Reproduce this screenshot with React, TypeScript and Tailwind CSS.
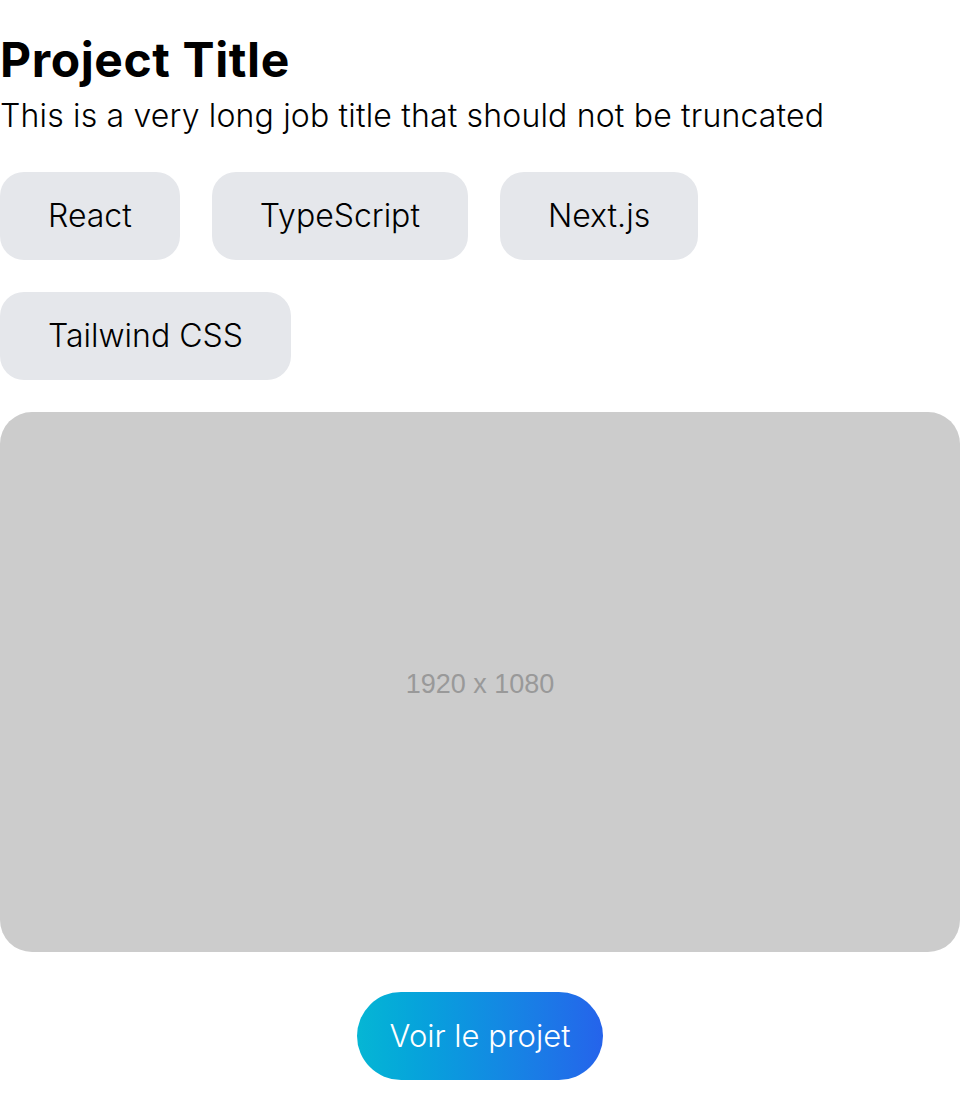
import React from 'react';

const tags = ['React', 'TypeScript', 'Next.js', 'Tailwind CSS'];

const App = () => {
  return (
    <section className="w-[960px] bg-white pt-[30px] font-['Inter',sans-serif] text-black">
      {/* header */}
      <h1 className="text-5xl font-bold leading-[60px] tracking-[0.6px]">Project Title</h1>
      <p className="mt-1.5 text-[32px] font-light leading-10 tracking-[0.17px]">
        This is a very long job title that should not be truncated
      </p>

      {/* stack */}
      <div className="mt-9 flex flex-wrap gap-8">
        {tags.map((tag) => (
          <span key={tag} className="rounded-3xl bg-[#e5e7eb] px-12 py-6 text-[32px] font-light leading-10">
            {tag}
          </span>
        ))}
      </div>

      {/* preview placeholder */}
      <div className="mt-8 flex h-[540px] w-full items-center justify-center rounded-[32px] bg-[#cccccc]">
        <span className="mt-1 font-['Liberation_Sans',Arial,sans-serif] text-[27px] text-[#999999]">1920 x 1080</span>
      </div>

      <div className="mt-10 flex justify-center">
        <a className="rounded-full bg-gradient-to-r from-[#06b6d4] to-[#2563eb] px-[33px] py-6 text-[31px] font-light leading-10 text-white">
          Voir le projet
        </a>
      </div>
    </section>
  );
};

export default App;
